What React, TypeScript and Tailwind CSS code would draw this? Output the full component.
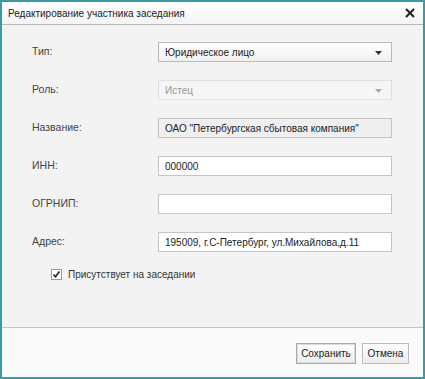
import React from "react";

const font = { fontFamily: '"Liberation Sans", Arial, sans-serif' };

function Row({ label, children }: { label: string; children: React.ReactNode }) {
  return (
    <div className="flex items-center h-[20px]">
      <div className="w-[126px] text-[10.5px] text-[#444]">{label}</div>
      <div className="w-[234px] h-[20px]">{children}</div>
    </div>
  );
}

function Arrow({ color }: { color: string }) {
  return (
    <svg width="7" height="4" viewBox="0 0 7 4" className="absolute right-[9px] top-[8px]">
      <path d="M0 0 H7 L3.5 4 Z" fill={color} />
    </svg>
  );
}

export default function App() {
  return (
    <div
      style={font}
      className="w-[425px] h-[379px] border-2 border-[#3b9aa3] flex flex-col bg-[#f3f3f3] overflow-hidden"
    >
      <div className="h-[23px] flex items-center justify-between pl-[6px] pr-[8px] bg-gradient-to-b from-white to-[#f4f4f4] border-b border-[#b9b9b9]">
        <span className="text-[10px] text-[#222]">Редактирование участника заседания</span>
        <svg width="10" height="10" viewBox="0 0 10 10">
          <path d="M1 1 L9 9 M9 1 L1 9" stroke="#222" strokeWidth="2" />
        </svg>
      </div>
      <div className="flex-1 flex flex-col pl-[30px] pt-[17px] gap-[18px]">
        <Row label="Тип:">
          <div className="relative h-full border border-[#b8b8b8] bg-gradient-to-b from-white to-[#f0f0f0] flex items-center pl-[6px] text-[10px] text-[#222]">
            Юридическое лицо
            <Arrow color="#333" />
          </div>
        </Row>
        <Row label="Роль:">
          <div className="relative h-full border border-[#dedede] bg-[#f6f6f6] flex items-center pl-[6px] text-[10px] text-[#999]">
            Истец
            <Arrow color="#aaa" />
          </div>
        </Row>
        <Row label="Название:">
          <div className="h-full border border-[#c4c4c4] bg-[#efefef] flex items-center pl-[6px] text-[10px] text-[#222]">
            ОАО "Петербургская сбытовая компания"
          </div>
        </Row>
        <Row label="ИНН:">
          <div className="h-full border border-[#c4c4c4] bg-white flex items-center pl-[6px] text-[10px] text-[#222]">
            000000
          </div>
        </Row>
        <Row label="ОГРНИП:">
          <div className="h-full border border-[#c4c4c4] bg-white" />
        </Row>
        <Row label="Адрес:">
          <div className="h-full border border-[#c4c4c4] bg-white flex items-center pl-[6px] text-[10px] text-[#222]">
            195009, г.С-Петербург, ул.Михайлова,д.11
          </div>
        </Row>
        <div className="flex items-center pl-[19px] -mt-[3px] gap-[6px]">
          <div className="w-[11px] h-[11px] border border-[#999] bg-white flex items-center justify-center">
            <svg width="9" height="9" viewBox="0 0 9 9">
              <path d="M1.5 4.5 L3.5 6.8 L7.5 1.5" stroke="#222" strokeWidth="1.6" fill="none" />
            </svg>
          </div>
          <span className="text-[10px] text-[#333]">Присутствует на заседании</span>
        </div>
      </div>
      <div className="h-[50px] border-t border-[#c6c6c6] bg-[#fafafa] flex items-start justify-end pt-[15px] pr-[14px] gap-[6px]">
        <button className="h-[21px] w-[60px] border border-[#a8a8a8] shadow-[inset_0_0_0_1px_#dcdcdc] bg-gradient-to-b from-white to-[#ececec] text-[10px] text-[#222]">
          Сохранить
        </button>
        <button className="h-[21px] w-[47px] border border-[#bdbdbd] bg-gradient-to-b from-white to-[#ececec] text-[10px] text-[#222]">
          Отмена
        </button>
      </div>
    </div>
  );
}
